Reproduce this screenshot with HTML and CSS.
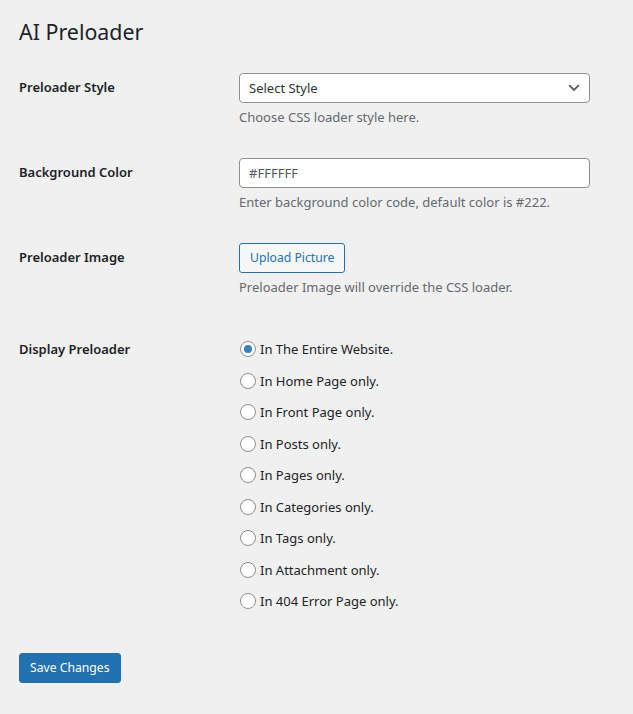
FILE: index.html
```html
<!DOCTYPE html>
<html lang="en">
<head>
<meta charset="utf-8">
<title>AI Preloader</title>
<link rel="stylesheet" href="styles.css">
</head>
<body>
<div class="wrap">
  <h1 class="title">AI Preloader</h1>
  <form class="form">
    <div class="row">
      <div class="label">Preloader Style</div>
      <div class="field">
        <div class="select">
          <span>Select Style</span>
          <svg class="chev" width="16" height="16" viewBox="0 0 20 20"><path d="M5 6l5 5 5-5 2 1-7 7-7-7 2-1z" fill="#555"/></svg>
        </div>
        <p class="desc">Choose CSS loader style here.</p>
      </div>
    </div>
    <div class="row">
      <div class="label">Background Color</div>
      <div class="field">
        <div class="input">#FFFFFF</div>
        <p class="desc">Enter background color code, default color is #222.</p>
      </div>
    </div>
    <div class="row">
      <div class="label">Preloader Image</div>
      <div class="field">
        <div><button type="button" class="btn btn-secondary">Upload Picture</button></div>
        <p class="desc">Preloader Image will override the CSS loader.</p>
      </div>
    </div>
    <div class="row row-radios">
      <div class="label">Display Preloader</div>
      <div class="field radios">
        <label class="radio"><span class="dot checked"></span>In The Entire Website.</label>
        <label class="radio"><span class="dot"></span>In Home Page only.</label>
        <label class="radio"><span class="dot"></span>In Front Page only.</label>
        <label class="radio"><span class="dot"></span>In Posts only.</label>
        <label class="radio"><span class="dot"></span>In Pages only.</label>
        <label class="radio"><span class="dot"></span>In Categories only.</label>
        <label class="radio"><span class="dot"></span>In Tags only.</label>
        <label class="radio"><span class="dot"></span>In Attachment only.</label>
        <label class="radio"><span class="dot"></span>In 404 Error Page only.</label>
      </div>
    </div>
    <div class="submit">
      <button type="button" class="btn btn-primary">Save Changes</button>
    </div>
  </form>
</div>
</body>
</html>
```
FILE: styles.css
```css
html, body {
  margin: 0;
  padding: 0;
  background: #f0f0f1;
  color: #1d2327;
  font-family: "Noto Sans", "Open Sans", sans-serif;
  font-size: 13px;
}
.wrap {
  padding: 18px 20px 0 19px;
}
.title {
  margin: 0;
  font-size: 21.4px;
  font-weight: 400;
  line-height: 28px;
}
.form {
  margin-top: 12px;
}
.row {
  display: grid;
  grid-template-columns: 220px 1fr;
}
.label {
  padding-top: 20px;
  font-weight: 600;
  line-height: 18px;
}
.field {
  padding: 15px 0;
  display: flex;
  flex-direction: column;
  align-items: flex-start;
}
.select, .input {
  box-sizing: border-box;
  width: 351px;
  height: 30px;
  border: 1px solid #8c8f94;
  border-radius: 4px;
  background: #fff;
  padding: 0 8px 0 9px;
  display: flex;
  align-items: center;
  line-height: 28px;
}
.select {
  justify-content: space-between;
  color: #2c3338;
  padding-right: 7px;
}
.input {
  color: #50575e;
}
.chev {
  display: block;
}
.desc {
  margin: 4px 0 0;
  color: #646970;
  line-height: 21px;
}
.btn {
  box-sizing: border-box;
  height: 30px;
  padding: 0 10px;
  border-radius: 3px;
  font-family: inherit;
  font-size: 12.2px;
  line-height: 28px;
  cursor: pointer;
}
.btn-secondary {
  border: 1px solid #2271b1;
  background: #f6f7f7;
  color: #2271b1;
}
.btn-primary {
  border: 1px solid #2271b1;
  background: #2271b1;
  color: #fff;
}
.row-radios .label {
  padding-top: 27px;
}
.radios {
  padding-top: 26px;
}
.radio {
  display: flex;
  align-items: center;
  height: 20px;
  margin-bottom: 11.5px;
  line-height: 20px;
}
.dot {
  box-sizing: border-box;
  width: 16px;
  height: 16px;
  border: 1px solid #8c8f94;
  border-radius: 50%;
  background: #fff;
  margin: 0 4px 0 1px;
  display: flex;
  align-items: center;
  justify-content: center;
}
.dot.checked::after {
  content: "";
  width: 8px;
  height: 8px;
  border-radius: 50%;
  background: #3582c4;
}
.submit {
  padding-top: 15px;
}
```
